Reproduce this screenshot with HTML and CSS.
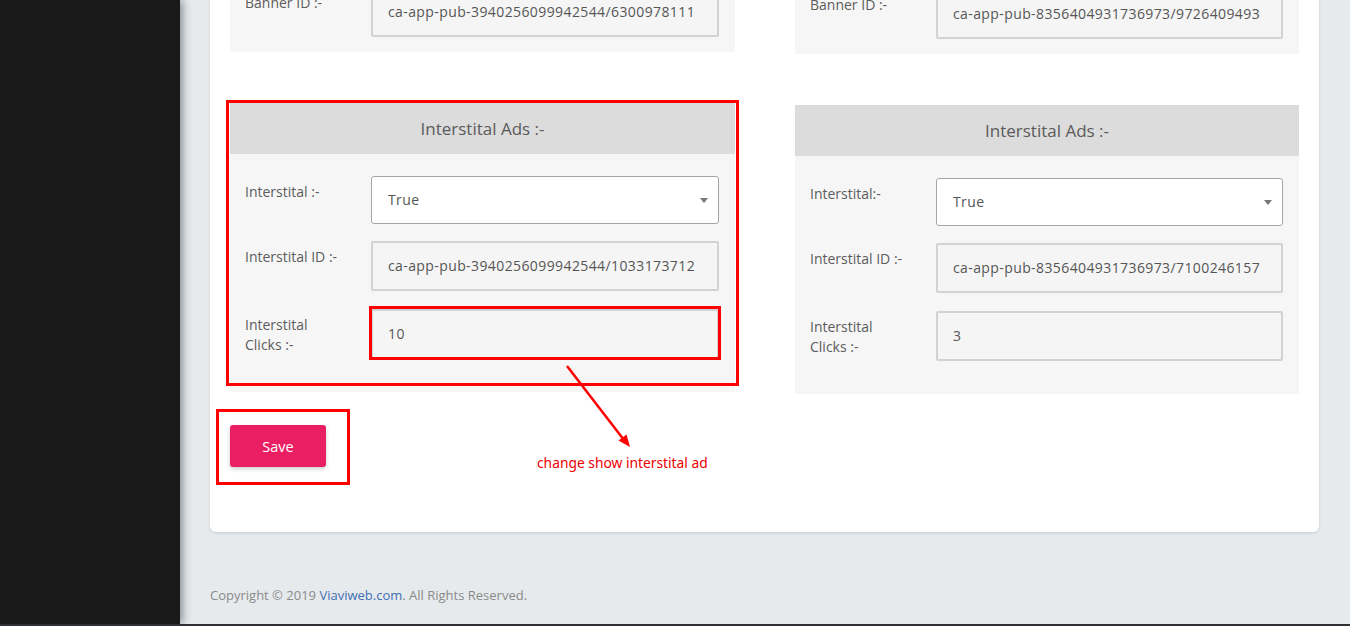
FILE: index.html
```html
<!DOCTYPE html>
<html lang="en">
<head>
<meta charset="utf-8">
<title>Ads Settings</title>
<link rel="stylesheet" href="styles.css">
</head>
<body>
<div class="app">
  <aside class="sidebar"></aside>
  <main class="main">
    <div class="card">
      <div class="columns">
        <div class="col">
          <section class="panel panel-banner">
            <h3 class="panel-head">Banner Ads :-</h3>
            <div class="panel-body">
              <div class="form-row">
                <label class="form-label">Banner :-</label>
                <div class="field field-select">True<span class="caret"></span></div>
              </div>
              <div class="form-row">
                <label class="form-label">Banner ID :-</label>
                <div class="field">ca-app-pub-3940256099942544/6300978111</div>
              </div>
            </div>
          </section>
          <section class="panel panel-inter">
            <h3 class="panel-head">Interstital Ads :-</h3>
            <div class="panel-body">
              <div class="form-row">
                <label class="form-label">Interstital :-</label>
                <div class="field field-select">True<span class="caret"></span></div>
              </div>
              <div class="form-row">
                <label class="form-label">Interstital ID :-</label>
                <div class="field">ca-app-pub-3940256099942544/1033173712</div>
              </div>
              <div class="form-row form-row-last">
                <label class="form-label">Interstital Clicks :-</label>
                <div class="field field-marked">10<span class="mark mark-field"></span></div>
              </div>
            </div>
            <span class="mark mark-panel"></span>
          </section>
        </div>
        <div class="col col-right">
          <section class="panel panel-banner">
            <h3 class="panel-head">Banner Ads :-</h3>
            <div class="panel-body">
              <div class="form-row">
                <label class="form-label">Banner :-</label>
                <div class="field field-select">True<span class="caret"></span></div>
              </div>
              <div class="form-row">
                <label class="form-label">Banner ID :-</label>
                <div class="field">ca-app-pub-8356404931736973/9726409493</div>
              </div>
            </div>
          </section>
          <section class="panel panel-inter">
            <h3 class="panel-head">Interstital Ads :-</h3>
            <div class="panel-body">
              <div class="form-row">
                <label class="form-label">Interstital:-</label>
                <div class="field field-select">True<span class="caret"></span></div>
              </div>
              <div class="form-row">
                <label class="form-label">Interstital ID :-</label>
                <div class="field">ca-app-pub-8356404931736973/7100246157</div>
              </div>
              <div class="form-row form-row-last">
                <label class="form-label">Interstital Clicks :-</label>
                <div class="field">3</div>
              </div>
            </div>
          </section>
        </div>
      </div>
      <div class="save-row">
        <button class="btn-save" type="button">Save<span class="mark mark-save"></span></button>
        <svg class="arrow" width="90" height="100" viewBox="0 0 90 100" aria-hidden="true">
          <line x1="7" y1="4" x2="64" y2="78" stroke="#f00" stroke-width="2.5"/>
          <polygon points="70,85 58.5,78.6 66.5,72.4" fill="#f00"/>
        </svg>
        <span class="note">change show interstital ad</span>
      </div>
    </div>
    <footer class="footer">Copyright © 2019 <a href="#" class="footer-link">Viaviweb.com</a>. All Rights Reserved.</footer>
  </main>
</div>
<div class="taskbar"></div>
</body>
</html>
```
FILE: styles.css
```css
* { box-sizing: border-box; }

html, body {
  margin: 0;
  padding: 0;
  height: 626px;
  overflow: hidden;
}

body {
  display: flex;
  flex-direction: column;
  background: #e6eaed;
  font-family: "Open Sans", "Liberation Sans", sans-serif;
  color: #555;
}

.app {
  flex: 1;
  display: flex;
  overflow: hidden;
}

.sidebar {
  width: 180px;
  flex: 0 0 180px;
  background: #1a1a1a;
  box-shadow: 2px 0 9px rgba(0, 0, 0, 0.45);
  position: relative;
  z-index: 2;
}

.main {
  flex: 1;
  padding: 0 31px 0 30px;
}

.card {
  margin-top: -171px;
  background: #fff;
  border-radius: 0 0 6px 6px;
  box-shadow: 0 1px 3px rgba(0, 0, 0, 0.12);
  padding: 20px 20px 65px 20px;
}

.columns {
  display: grid;
  grid-template-columns: 505px 504px;
  column-gap: 60px;
}

.col-right {
  padding-top: 2px;
}

.panel {
  background: #f6f6f6;
  position: relative;
}

.panel-inter {
  margin-top: 51px;
}

.panel-head {
  margin: 0;
  height: 51px;
  line-height: 51px;
  background: #dcdcdc;
  text-align: center;
  font-size: 17px;
  font-weight: 400;
  color: #5a5a5a;
}

.panel-body {
  padding: 22px 16px 15px 15px;
  display: flex;
  flex-direction: column;
  gap: 17px;
}

.panel-inter .panel-body {
  padding-bottom: 33px;
}

.form-row {
  display: grid;
  grid-template-columns: 126px 1fr;
  align-items: start;
}

.form-row-last {
  margin-top: 1px;
}

.form-label {
  font-size: 14px;
  line-height: 20px;
  padding-top: 6px;
  color: #5c5c5c;
  padding-right: 28px;
}

.field {
  position: relative;
  height: 50px;
  line-height: 46px;
  padding-left: 15px;
  border: 2px solid #d2d2d2;
  border-radius: 2px;
  background: #f5f5f5;
  font-size: 14px;
  letter-spacing: 0.4px;
  color: #555;
  white-space: nowrap;
}

.field-select {
  height: 48px;
  line-height: 46px;
  border: 1px solid #a6a6a6;
  border-radius: 3px;
  background: #fff;
  padding-left: 16px;
}

.caret {
  position: absolute;
  right: 10px;
  top: 21px;
  width: 0;
  height: 0;
  border-left: 4px solid transparent;
  border-right: 4px solid transparent;
  border-top: 5px solid #777;
}

.mark {
  position: absolute;
  border: 3px solid #f00;
  pointer-events: none;
}

.mark-panel {
  left: -4px;
  top: -3px;
  width: 513px;
  height: 286px;
}

.mark-field {
  left: -4px;
  top: -5px;
  width: 352px;
  height: 54px;
}

.mark-save {
  left: -14px;
  top: -16px;
  width: 134px;
  height: 76px;
}

.save-row {
  position: relative;
  margin-top: 31px;
  height: 42px;
}

.btn-save {
  position: relative;
  width: 96px;
  height: 42px;
  border: 0;
  border-radius: 3px;
  background: #e91e63;
  color: #fff;
  font-family: "Open Sans", "Liberation Sans", sans-serif;
  font-size: 14.5px;
  box-shadow: 0 2px 4px rgba(0, 0, 0, 0.2);
  cursor: pointer;
}

.arrow {
  position: absolute;
  left: 330px;
  top: -63px;
}

.note {
  position: absolute;
  left: 307px;
  top: 28px;
  font-family: "Noto Sans", "Liberation Sans", sans-serif;
  font-size: 13.8px;
  color: #e00;
  white-space: nowrap;
}

.footer {
  margin-top: 53px;
  font-size: 13px;
  line-height: 20px;
  color: #8a8a8a;
}

.footer-link {
  color: #3f6fb3;
  text-decoration: none;
}

.taskbar {
  height: 2px;
  flex: 0 0 2px;
  background: #2e3236;
}
```
